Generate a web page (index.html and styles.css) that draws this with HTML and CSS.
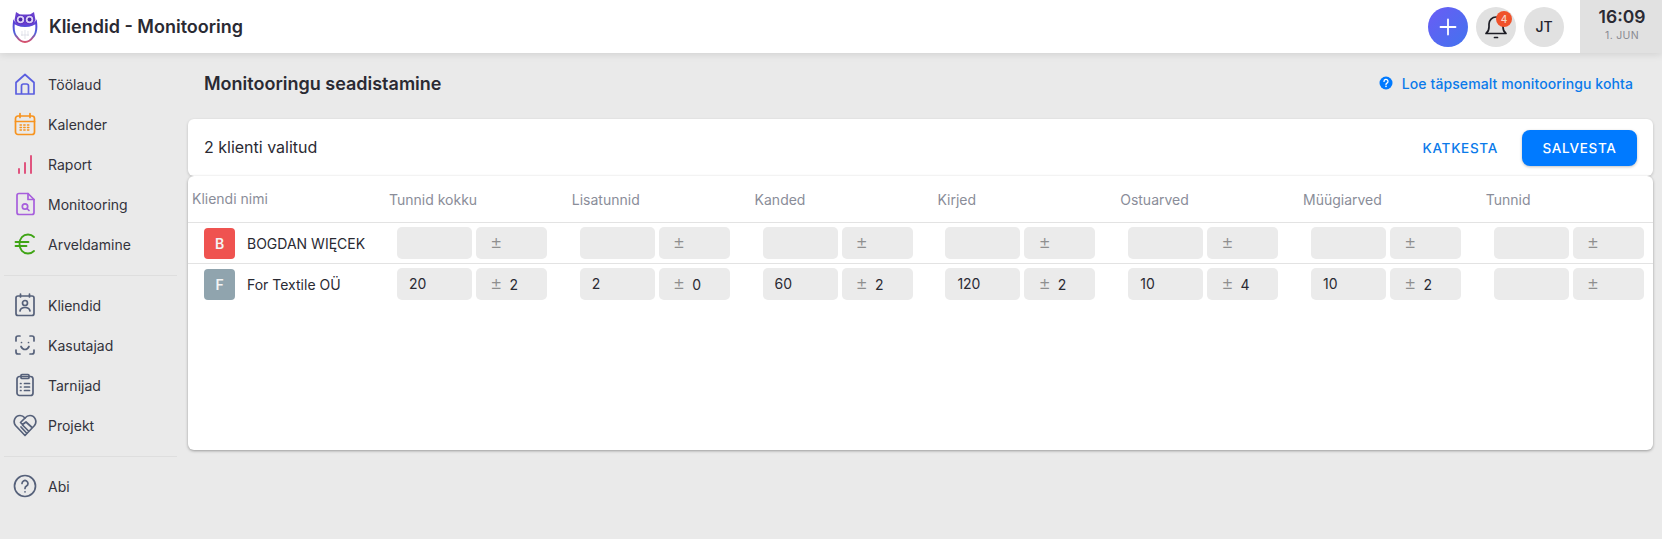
FILE: index.html
```html
<!DOCTYPE html>
<html lang="en">
    <head>
        <title>Kliendid - Monitooring</title>
        <meta charset="utf-8">
        <meta name="viewport" content="width=device-width, initial-scale=1.0">
        <link rel="stylesheet" href="styles.css">
    </head>
    <body>
        <header class="topbar">
            <svg class="logo" viewBox="0 0 26 32" width="26" height="32" fill="none">
                <defs>
                    <linearGradient id="owl" x1="0" y1="0" x2="0" y2="1">
                        <stop offset="0" stop-color="#5a3fd6"/>
                        <stop offset="0.55" stop-color="#4f62dc"/>
                        <stop offset="1" stop-color="#d9506a"/>
                    </linearGradient>
                </defs>
                <path d="M13 15C8 15 4 14 2 11c-1 7 0 12 3 15 2 3 5 5 8 5s6-2 8-5c3-3 4-8 3-15-2 3-6 4-11 4z" fill="#fff" stroke="url(#owl)" stroke-width="2"/>
                <path d="M4 1l4 2.500h10L22 1l1.500 8-2.500 5H5L2.500 9z" fill="#6a3fd0"/>
                <circle cx="8.500" cy="8.500" r="4.300" fill="#dcd0f5" stroke="#5a34c4" stroke-width="1.100"/>
                <circle cx="17.500" cy="8.500" r="4.300" fill="#dcd0f5" stroke="#5a34c4" stroke-width="1.100"/>
                <circle cx="8.500" cy="8.500" r="1.900" fill="#4a2aa8"/>
                <circle cx="17.500" cy="8.500" r="1.900" fill="#4a2aa8"/>
                <path d="M13 19v9M9 24h8M10 20v5M16 20v5" stroke="#d5d8e2" stroke-width="0.700"/>
            </svg>
            <div class="page-name">Kliendid - Monitooring</div>
            <div class="top-actions">
                <button type="button" class="round add">
                    <svg viewBox="0 0 20 20" width="20" height="20" fill="none" stroke="#fff" stroke-width="1.800" stroke-linecap="round"><path d="M10 2.500v15M2.500 10h15"/></svg>
                </button>
                <button type="button" class="round bell">
                    <svg viewBox="0 0 24 26" width="24" height="26" fill="none" stroke="#1c1c24" stroke-width="1.700" stroke-linecap="round" stroke-linejoin="round"><path d="M2 19.500c2-1.500 3-3 3-6.500V10a7 7 0 0 1 14 0v3c0 3.500 1 5 3 6.500z"/><path d="M10.500 23.500h3"/></svg>
                    <span class="badge">4</span>
                </button>
                <button type="button" class="round user">JT</button>
            </div>
            <div class="clock">
                <div class="time">16:09</div>
                <div class="date">1. JUN</div>
            </div>
        </header>

        <div class="page">
            <nav class="sidebar">
                <a class="nav-item">
                    <svg viewBox="0 0 24 24" fill="none" stroke="#5b5fe0" stroke-width="1.700" stroke-linejoin="round"><path d="M3 10.500L12 2.500l9 8V22H3z"/><path d="M8.500 22v-8a2 2 0 0 1 2-2h3a2 2 0 0 1 2 2v8"/></svg>
                    Töölaud
                </a>
                <a class="nav-item">
                    <svg viewBox="0 0 24 24" fill="none" stroke="#f7931e" stroke-width="1.700" stroke-linecap="round"><rect x="2.500" y="4" width="19" height="18.500" rx="2.500"/><path d="M2.500 9.500h19M7 1.500v4M17 1.500v4"/><path d="M7 13h10M7 15.500h10M7 18h10" stroke-dasharray="1.500 2.200" stroke-width="1.300"/></svg>
                    Kalender
                </a>
                <a class="nav-item">
                    <svg viewBox="0 0 24 24" fill="none" stroke="#e0557f" stroke-width="2" stroke-linecap="round"><path d="M6 21v-4M12 21V11M18 21V4"/></svg>
                    Raport
                </a>
                <a class="nav-item">
                    <svg viewBox="0 0 24 24" fill="none" stroke="#a75fdc" stroke-width="1.700" stroke-linejoin="round" stroke-linecap="round"><path d="M4 3.500a2 2 0 0 1 2-2h9l6 6v13a2 2 0 0 1-2 2H6a2 2 0 0 1-2-2z"/><path d="M15 1.500v6h6"/><circle cx="12" cy="14.500" r="2.700"/><path d="M14 16.500l2 2"/></svg>
                    Monitooring
                </a>
                <a class="nav-item">
                    <svg viewBox="0 0 24 24" fill="none" stroke="#3fa415" stroke-width="1.800" stroke-linecap="round"><path d="M21 5c-1.500-1.500-3.500-2.500-6-2.500-5 0-8.500 4-8.500 9.500s3.500 9.500 8.500 9.500c2.500 0 4.500-1 6-2.500"/><path d="M2.500 10h13M2.500 14h11"/></svg>
                    Arveldamine
                </a>
                <div class="nav-line"></div>
                <a class="nav-item">
                    <svg viewBox="0 0 24 24" fill="none" stroke="#56617a" stroke-width="1.700" stroke-linecap="round" stroke-linejoin="round"><rect x="3" y="3" width="18" height="19.500" rx="2"/><path d="M7.500 1v3M16.500 1v3"/><circle cx="12" cy="10" r="2.500"/><path d="M7 18c.5-2.500 2.500-3.500 5-3.500s4.500 1 5 3.500"/></svg>
                    Kliendid
                </a>
                <a class="nav-item">
                    <svg viewBox="0 0 24 24" fill="none" stroke="#56617a" stroke-width="1.700" stroke-linecap="round" stroke-linejoin="round"><path d="M3 8V5a2 2 0 0 1 2-2h2M17 3h2a2 2 0 0 1 2 2v3M21 17v2a2 2 0 0 1-2 2h-2M7 21H5a2 2 0 0 1-2-2v-2"/><path d="M8 13.500c1 2 2.300 3 4 3s3-1 4-3"/><path d="M8.500 9.500h.01M15.500 9.500h.01"/></svg>
                    Kasutajad
                </a>
                <a class="nav-item">
                    <svg viewBox="0 0 24 24" fill="none" stroke="#56617a" stroke-width="1.700" stroke-linecap="round" stroke-linejoin="round"><rect x="4" y="3.500" width="16" height="19" rx="2.500"/><rect x="8" y="1.500" width="8" height="4" rx="1"/><path d="M11.500 10.500H16.500M11.500 14H16.500M11.500 17.500H16.500M7.500 10.500h.5M7.500 14h.5M7.500 17.500h.5"/></svg>
                    Tarnijad
                </a>
                <a class="nav-item">
                    <svg viewBox="0 0 24 24" fill="none" stroke="#56617a" stroke-width="1.700" stroke-linecap="round" stroke-linejoin="round"><path d="M12 22.500L2.500 12.500C-.5 8.500 2 2.500 7 2.500c2 0 3.700 1 5 2.500 1.300-1.500 3-2.500 5-2.500 5 0 7.500 6 4.500 10z"/><path d="M12 5L7.500 9.500 9.500 11.500 13 9l5.500 5M9.500 12l6 6M8 14l5.500 6"/></svg>
                    Projekt
                </a>
                <div class="nav-line"></div>
                <a class="nav-item">
                    <svg viewBox="0 0 24 24" fill="none" stroke="#56617a" stroke-width="1.700" stroke-linecap="round" stroke-linejoin="round"><circle cx="12" cy="12" r="10.500"/><path d="M9 9.500a3 3 0 1 1 4.500 2.600c-1 .6-1.500 1.200-1.500 2.400"/><path d="M12 17.800h.01"/></svg>
                    Abi
                </a>
            </nav>

            <main class="content">
                <div class="title-row">
                    <h1>Monitooringu seadistamine</h1>
                    <a class="help-link">
                        <svg viewBox="0 0 14 14" width="14" height="14"><circle cx="7" cy="7" r="6.500" fill="#007aff"/><path d="M5 5.400a2 2 0 1 1 3 1.700c-.7.400-1 .8-1 1.400" fill="none" stroke="#fff" stroke-width="1.300" stroke-linecap="round"/><circle cx="7" cy="10.400" r=".8" fill="#fff"/></svg>
                        Loe täpsemalt monitooringu kohta
                    </a>
                </div>

                <section class="selection-card">
                    <div class="selected">2 klienti valitud</div>
                    <button type="button" class="btn-text">KATKESTA</button>
                    <button type="button" class="btn-save">SALVESTA</button>
                </section>

                <section class="table-card">
                    <div class="table-row table-head">
                        <div class="head-name">Kliendi nimi</div>
                        <div>Tunnid kokku</div>
                        <div>Lisatunnid</div>
                        <div>Kanded</div>
                        <div>Kirjed</div>
                        <div>Ostuarved</div>
                        <div>Müügiarved</div>
                        <div>Tunnid</div>
                    </div>
                    <div class="table-row client">
                        <div class="client-name"><span class="avatar red">B</span>BOGDAN WIĘCEK</div>
                        <div class="pair"><span class="box"></span><span class="box tol"><i>±</i></span></div>
                        <div class="pair"><span class="box"></span><span class="box tol"><i>±</i></span></div>
                        <div class="pair"><span class="box"></span><span class="box tol"><i>±</i></span></div>
                        <div class="pair"><span class="box"></span><span class="box tol"><i>±</i></span></div>
                        <div class="pair"><span class="box"></span><span class="box tol"><i>±</i></span></div>
                        <div class="pair"><span class="box"></span><span class="box tol"><i>±</i></span></div>
                        <div class="pair"><span class="box"></span><span class="box tol"><i>±</i></span></div>
                    </div>
                    <div class="table-row client">
                        <div class="client-name"><span class="avatar grey">F</span>For Textile OÜ</div>
                        <div class="pair"><span class="box">20</span><span class="box tol"><i>±</i>2</span></div>
                        <div class="pair"><span class="box">2</span><span class="box tol"><i>±</i>0</span></div>
                        <div class="pair"><span class="box">60</span><span class="box tol"><i>±</i>2</span></div>
                        <div class="pair"><span class="box">120</span><span class="box tol"><i>±</i>2</span></div>
                        <div class="pair"><span class="box">10</span><span class="box tol"><i>±</i>4</span></div>
                        <div class="pair"><span class="box">10</span><span class="box tol"><i>±</i>2</span></div>
                        <div class="pair"><span class="box"></span><span class="box tol"><i>±</i></span></div>
                    </div>
                </section>
            </main>
        </div>
    </body>
</html>
```

FILE: styles.css
```css
* {
    box-sizing: border-box;
}
body {
    margin: 0;
    height: 539px;
    overflow: hidden;
    background: #eaeaea;
    color: #2a2a33;
    font-family: Inter, 'Noto Sans', sans-serif;
    font-size: 14px;
}
button {
    border: 0;
    font-family: inherit;
}

/* top bar */
.topbar {
    display: flex;
    align-items: center;
    height: 53px;
    padding-left: 12px;
    background: white;
    box-shadow: 0 1px 8px rgba(0, 0, 0, 0.12);
}
.logo {
    margin-right: 11px;
}
.page-name {
    font-size: 18px;
    font-weight: 600;
}
.top-actions {
    display: flex;
    gap: 8px;
    margin-left: auto;
    margin-right: 16px;
}
.round {
    position: relative;
    display: flex;
    align-items: center;
    justify-content: center;
    width: 40px;
    height: 40px;
    padding: 0;
    border-radius: 50%;
    background: #e1e1e1;
    font-size: 14px;
    font-weight: 500;
    color: #23232d;
}
.add {
    background: linear-gradient(135deg, #6a5cf5, #4273ee);
}
.badge {
    position: absolute;
    top: 4px;
    right: 4px;
    width: 16px;
    height: 16px;
    border-radius: 50%;
    background: #f0522b;
    color: #f6d6c8;
    font-size: 10px;
    line-height: 16px;
    text-align: center;
}
.clock {
    width: 82px;
    height: 53px;
    padding-top: 6px;
    padding-left: 2px;
    background: #e1e1e1;
    text-align: center;
}
.time {
    font-size: 17.500px;
    font-weight: 600;
    line-height: 22px;
}
.date {
    font-size: 10.500px;
    color: #8a8a92;
    line-height: 16px;
    letter-spacing: 0.3px;
}

/* sidebar */
.page {
    display: flex;
}
.sidebar {
    width: 188px;
    flex-shrink: 0;
    padding: 11px 11px 0 4px;
}
.nav-item {
    display: flex;
    align-items: center;
    height: 40px;
    padding-left: 9px;
    color: #33333c;
    font-size: 14px;
}
.nav-item svg {
    width: 24px;
    height: 24px;
    margin-right: 11px;
    flex-shrink: 0;
}
.nav-line {
    height: 1px;
    margin: 11px 0 9px;
    background: #dedede;
}

/* main */
.content {
    flex: 1;
    padding-right: 9px;
}
.title-row {
    display: flex;
    align-items: center;
    justify-content: space-between;
    height: 66px;
    padding: 0 20px 6px 16px;
}
h1 {
    margin: 0;
    font-size: 18px;
    font-weight: 600;
}
.help-link {
    display: flex;
    align-items: center;
    gap: 9px;
    color: #0a7aea;
    font-size: 14px;
    letter-spacing: 0.1px;
    font-weight: 500;
}
.selection-card {
    display: flex;
    align-items: center;
    height: 57px;
    padding: 0 16px;
    background: white;
    border-radius: 6px;
    box-shadow: 0 1px 3px rgba(0, 0, 0, 0.2);
}
.selected {
    flex: 1;
    font-size: 16px;
    padding-bottom: 2px;
}
.btn-text {
    margin-right: 18px;
    background: none;
    color: #0a7aea;
    font-size: 13.500px;
    font-weight: 500;
    letter-spacing: 0.7px;
}
.btn-save {
    width: 115px;
    height: 36px;
    border-radius: 8px;
    background: #007aff;
    color: white;
    font-size: 13.500px;
    font-weight: 500;
    letter-spacing: 0.7px;
    box-shadow: 0 1px 3px rgba(0, 0, 0, 0.25);
}
.table-card {
    height: 274px;
    background: white;
    border-radius: 6px;
    box-shadow: 0 1px 3px rgba(0, 0, 0, 0.35);
}
.table-row {
    display: grid;
    grid-template-columns: 201px repeat(6, 182.8px) 1fr;
}
.table-head {
    height: 47px;
    color: #8a8d99;
    font-size: 14px;
    line-height: 48px;
    border-bottom: 1px solid #e3e3e3;
}
.head-name {
    padding-left: 4px;
    line-height: 45px;
}
.client {
    height: 41px;
    align-items: center;
    border-bottom: 1px solid #e3e3e3;
}
.client:last-child {
    height: 40px;
    border-bottom: 0;
}
.client-name {
    display: flex;
    align-items: center;
    padding-left: 16px;
    font-size: 14px;
}
.avatar {
    width: 31px;
    height: 31px;
    margin-right: 12px;
    border-radius: 4px;
    color: #f4f4f4;
    font-weight: 600;
    line-height: 31px;
    text-align: center;
}
.red {
    background: #ef5350;
}
.grey {
    background: #90a4ae;
}
.pair {
    display: flex;
    gap: 4px;
    padding-left: 8px;
}
.box {
    width: 75px;
    height: 32px;
    padding-left: 12px;
    border-radius: 5px;
    background: #ebebeb;
    line-height: 32px;
}
.tol {
    width: 71px;
    padding-left: 14px;
}
.tol i {
    margin-right: 7px;
    color: #8f8f8f;
    font-size: 19px;
    font-style: normal;
    font-weight: 300;
}
```
